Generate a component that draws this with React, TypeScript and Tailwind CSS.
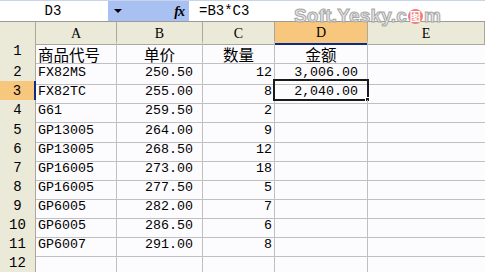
import type { ReactNode } from 'react'

const cols = ['A', 'B', 'C', 'D', 'E']

const rows: { a: string; b: string; c: string; d: string }[] = [
  { a: '商品代号', b: '单价', c: '数量', d: '金额' },
  { a: 'FX82MS', b: '250.50', c: '12', d: '3,006.00' },
  { a: 'FX82TC', b: '255.00', c: '8', d: '2,040.00' },
  { a: 'G61', b: '259.50', c: '2', d: '' },
  { a: 'GP13005', b: '264.00', c: '9', d: '' },
  { a: 'GP13005', b: '268.50', c: '12', d: '' },
  { a: 'GP16005', b: '273.00', c: '18', d: '' },
  { a: 'GP16005', b: '277.50', c: '5', d: '' },
  { a: 'GP6005', b: '282.00', c: '7', d: '' },
  { a: 'GP6005', b: '286.50', c: '6', d: '' },
  { a: 'GP6007', b: '291.00', c: '8', d: '' },
  { a: '', b: '', c: '', d: '' },
]

// row heights incl. the 1px bottom grid line
const heights = [21, 19, 19, 20, 19, 19, 19, 19, 19, 19, 19, 19]

const gridCols = 'grid grid-cols-[36px_81px_86px_72px_93px_117px]'

function Cjk({ children }: { children: ReactNode }) {
  return <span className="font-['Noto_Sans_CJK_SC',sans-serif] text-[15.5px] leading-none">{children}</span>
}

export default function App() {
  return (
    <div className="w-[485px] h-[272px] overflow-hidden bg-[#fcfbfe] text-black font-['Liberation_Mono','Noto_Sans_CJK_SC',monospace] text-[13.3px] relative">
      {/* Formula bar */}
      <div className="flex h-[21px] border-t border-[#c9d3ea]">
        <div className="w-[108px] bg-white flex items-center justify-center pr-[2px] text-[14px]">D3</div>
        <div className="w-[81px] bg-[#a9c1f2] flex items-center justify-between pl-[6px] pr-[5px]">
          <span className="w-0 h-0 border-l-[4px] border-r-[4px] border-t-[4px] border-l-transparent border-r-transparent border-t-black" />
          <span className="font-['Liberation_Serif',serif] italic font-bold text-[14px] tracking-[-1px]">fx</span>
        </div>
        <div className="flex-1 bg-white flex items-center pl-[10px] text-[14px]">=B3*C3</div>
      </div>
      <div className="h-px bg-[#9a9a9a]" />

      {/* Column headers */}
      <div className={`${gridCols} h-[19px]`}>
        <div className="bg-[#ebe9d8] border-r border-b border-[#aca899]" />
        {cols.map((c) => (
          <div
            key={c}
            className={
              c === 'D'
                ? 'bg-[#f8c77e] border-r border-[#aca899] border-b-2 border-b-[#0c2a8a] flex items-center justify-center'
                : 'bg-[#ebe9d8] border-r border-b border-[#aca899] flex items-center justify-center'
            }
          >
            <span className="font-['Liberation_Serif',serif] text-[14px]">{c}</span>
          </div>
        ))}
      </div>

      {/* Rows */}
      {rows.map((r, i) => {
        const n = i + 1
        const head = i === 0
        return (
          <div key={n} className={gridCols} style={{ height: heights[i] }}>
            <div
              className={
                n === 3
                  ? 'bg-[#f8c77e] border-b border-[#aca899] border-r-2 border-r-[#0c2a8a] flex items-end justify-center pb-[1px] text-[14px]'
                  : 'bg-[#ebe9d8] border-r border-b border-[#aca899] flex items-end justify-center pb-[1px] text-[14px]'
              }
            >
              {n}
            </div>
            <div className="border-r border-b border-[#c0c0c0] flex items-end pl-[2px] pb-[1px] whitespace-nowrap">
              {head ? <Cjk>{r.a}</Cjk> : r.a}
            </div>
            <div
              className={`border-r border-b border-[#c0c0c0] flex items-end pb-[1px] ${head ? 'justify-center' : 'justify-end pr-[9px]'}`}
            >
              {head ? <Cjk>{r.b}</Cjk> : r.b}
            </div>
            <div
              className={`border-r border-b border-[#c0c0c0] flex items-end pb-[1px] ${head ? 'justify-center' : 'justify-end pr-[2px]'}`}
            >
              {head ? <Cjk>{r.c}</Cjk> : r.c}
            </div>
            <div
              className={`relative border-r border-b border-[#c0c0c0] flex items-end pb-[1px] ${head ? 'justify-center' : 'justify-end pr-[9px]'}`}
            >
              {head ? <Cjk>{r.d}</Cjk> : r.d}
              {n === 3 && (
                <>
                  <div className="absolute left-[-2px] top-[-2px] w-[96px] h-[22px] border-2 border-[#1a1a1a]" />
                  <div className="absolute left-[90px] top-[16px] w-[5px] h-[5px] bg-[#1a1a1a] border border-white" />
                </>
              )}
            </div>
            <div className="border-b border-[#c0c0c0]" />
          </div>
        )
      })}

      {/* Watermark */}
      <div className="absolute left-[294px] top-[2px] flex items-center font-['Liberation_Sans',sans-serif] font-bold text-[19px] text-[#e6e6e6] [-webkit-text-stroke:1px_#a8a8a8] tracking-[0.2px]">
        <span>Soft.Yesky.c</span>
        <span className="mx-[1px] w-[15px] h-[15px] rounded-full bg-[#f07d7d] text-white text-[11px] flex items-center justify-center font-['Noto_Sans_CJK_SC',sans-serif] [-webkit-text-stroke:0px]">
          图
        </span>
        <span>m</span>
      </div>
    </div>
  )
}
